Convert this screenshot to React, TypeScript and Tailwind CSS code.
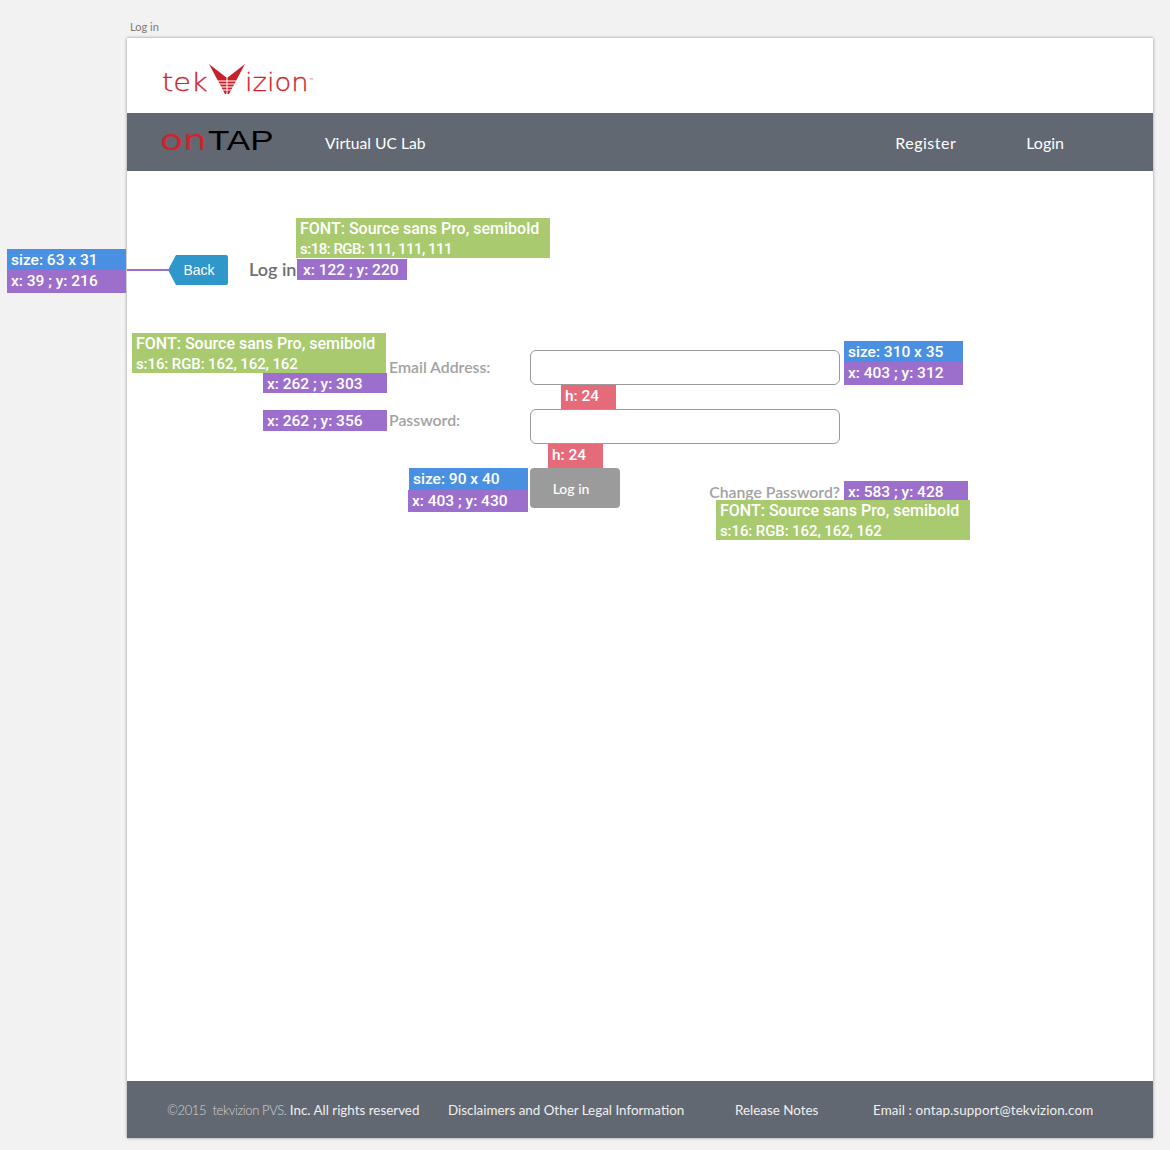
import React from 'react';

const sans = 'font-["Lato","Open_Sans",sans-serif]';

type TagProps = { className: string; children: React.ReactNode };

// redline annotations sit over the mockup at their own canvas positions
const Tag: React.FC<TagProps> = ({ className, children }) => (
  <div className={`absolute px-1 pt-[1px] text-white text-[15.5px] leading-[20px] font-medium font-['Roboto',sans-serif] ${className}`}>{children}</div>
);

const FontNote: React.FC<TagProps> = ({ className, children }) => (
  <div className={`absolute w-[254px] h-[40px] px-1 pt-[1px] bg-[#a9ca6f] text-white text-[16px] leading-[20px] font-medium font-['Roboto',sans-serif] ${className}`}>{children}</div>
);

const Logo = () => (
  <div className="flex items-end text-[#d1232e] h-[30px] leading-none font-['DejaVu_Sans',sans-serif] font-extralight [-webkit-text-stroke:0.3px_#d1232e]">
    <span className="text-[24px] scale-x-[1.2] origin-left w-[47px] leading-[22px]">tek</span>
    <svg width="36" height="30" viewBox="0 0 36 30" className="shrink-0">
      <path d="M0 0 L18 14 L36 0 L20 30 H16 Z" fill="#c8202b" />
      <path d="M18 14 V30 M8 17 H28 M8 20 H28 M8 23 H28 M8 26 H28" stroke="#fff" strokeWidth="1" />
    </svg>
    <span className="text-[24px] scale-x-[1.14] origin-left w-[64px] leading-[22px]">izion</span>
    <span className="text-[5px] self-start mt-[14px] font-normal [-webkit-text-stroke:0]">™</span>
  </div>
);

export default function App() {
  return (
    <div className={`relative w-[1170px] h-[1150px] bg-[#f2f2f2] pt-[20px] ${sans}`}>
      <div className="ml-[130px] h-[18px] text-[11px] leading-[13px] text-[#7b7b7b]">Log in</div>

      <div className="ml-[127px] w-[1026px] h-[1100px] flex flex-col bg-white shadow-[0_0_3px_rgba(0,0,0,0.4)]">
        <header className="h-[75px] pl-[35px] pt-[26px] shrink-0">
          <Logo />
        </header>

        <nav className="h-[58px] shrink-0 bg-[#616871] flex items-center text-white text-[16px]">
          <div className="w-[198px] pl-[33px] mb-[3px] flex items-baseline leading-none whitespace-nowrap">
            <span className="inline-block w-[48px] origin-left scale-x-[1.3] text-[#d1232e] font-['DejaVu_Sans',sans-serif] text-[29px]">on</span>
            <span className="inline-block origin-left scale-x-[1.25] text-black font-['Liberation_Sans',sans-serif] text-[28px]">TAP</span>
          </div>
          <span className="mt-[4px] text-[15.7px]">Virtual UC Lab</span>
          <div className="ml-auto flex gap-[70px] pr-[89px] mt-[1px]">
            <span className="tracking-[0.5px]">Register</span>
            <span>Login</span>
          </div>
        </nav>

        <main className="flex-1 pt-[84px] text-[#a2a2a2] font-semibold">
          <div className="flex items-center pl-[41px] h-[30px]">
            <button className="w-[60px] h-[30px] bg-[#3097cb] rounded-r-[2px] text-white text-[14px] font-normal font-['Liberation_Sans',sans-serif] pl-[2px] [clip-path:polygon(8px_0,100%_0,100%_100%,8px_100%,0_50%)]">
              Back
            </button>
            <h1 className="ml-[21px] mb-[1px] text-[18px] text-[#6f6f6f]">Log in</h1>
          </div>

          <form className="ml-[262px] mt-[65px] grid grid-cols-[141px_310px_1fr] gap-y-[24px] text-[15.8px]">
            <label className="pt-[5px]">Email Address:</label>
            <input className="h-[35px] border border-[#9a9a9a] rounded-[6px] bg-white" />
            <div />
            <label className="-mt-[1px]">Password:</label>
            <input className="h-[35px] border border-[#9a9a9a] rounded-[6px] bg-white" />
            <div />
            <div />
            <div className="flex justify-between items-start">
              <button type="button" className="w-[90px] h-[40px] pt-[1px] pr-[8px] rounded-[4px] bg-[#9b9b9b] text-white text-[14px] font-medium">
                Log in
              </button>
              <a className="mt-[12px] whitespace-nowrap">Change Password?</a>
            </div>
          </form>
        </main>

        <footer className="h-[57px] shrink-0 bg-[#616871] flex items-center pl-[40px] pt-[2px] text-[13.4px] text-[#f0f0f0] whitespace-nowrap">
          <span className="w-[281px]">
            <span className="font-light text-[13px] tracking-[-0.38px] text-[#d0d3d6]">©2015&nbsp; tekvizion PVS.</span> Inc. All rights reserved
          </span>
          <span className="w-[287px]">Disclaimers and Other Legal Information</span>
          <span className="w-[138px]">Release Notes</span>
          <span className="tracking-[0.1px]">Email : ontap.support@tekvizion.com</span>
        </footer>
      </div>

      <div className="absolute left-[127px] top-[269px] w-[42px] h-[2px] bg-[#9b6fcb]" />
      <Tag className="left-[7px] top-[249px] w-[119px] h-[21px] bg-[#4a90e2]">size: 63 x 31</Tag>
      <Tag className="left-[7px] top-[270px] w-[119px] h-[23px] bg-[#9b6fcb]">x: 39 ; y: 216</Tag>

      <FontNote className="left-[296px] top-[218px]">FONT: Source sans Pro, semibold<br /><span className="text-[15px] tracking-[-0.5px]">s:18: RGB: 111, 111, 111</span></FontNote>
      <Tag className="left-[297px] top-[259px] w-[110px] h-[21px] bg-[#9b6fcb] pl-[6px]">x: 122 ; y: 220</Tag>

      <FontNote className="left-[132px] top-[333px]">FONT: Source sans Pro, semibold<br /><span className="text-[15px] tracking-[-0.1px]">s:16: RGB: 162, 162, 162</span></FontNote>
      <Tag className="left-[263px] top-[373px] w-[124px] h-[20px] bg-[#9b6fcb]">x: 262 ; y: 303</Tag>
      <Tag className="left-[263px] top-[410px] w-[124px] h-[21px] bg-[#9b6fcb]">x: 262 ; y: 356</Tag>

      <Tag className="left-[844px] top-[341px] w-[119px] h-[21px] bg-[#4a90e2]">size: 310 x 35</Tag>
      <Tag className="left-[844px] top-[362px] w-[119px] h-[23px] bg-[#9b6fcb]">x: 403 ; y: 312</Tag>

      <Tag className="left-[561px] top-[385px] w-[55px] h-[24px] bg-[#e56b7a]">h: 24</Tag>
      <Tag className="left-[548px] top-[444px] w-[55px] h-[24px] bg-[#e56b7a]">h: 24</Tag>

      <Tag className="left-[409px] top-[468px] w-[119px] h-[22px] bg-[#4a90e2]">size: 90 x 40</Tag>
      <Tag className="left-[408px] top-[490px] w-[120px] h-[22px] bg-[#9b6fcb]">x: 403 ; y: 430</Tag>

      <Tag className="left-[844px] top-[481px] w-[124px] h-[20px] bg-[#9b6fcb]">x: 583 ; y: 428</Tag>
      <FontNote className="left-[716px] top-[500px]">FONT: Source sans Pro, semibold<br /><span className="text-[15px] tracking-[-0.1px]">s:16: RGB: 162, 162, 162</span></FontNote>
    </div>
  );
}
